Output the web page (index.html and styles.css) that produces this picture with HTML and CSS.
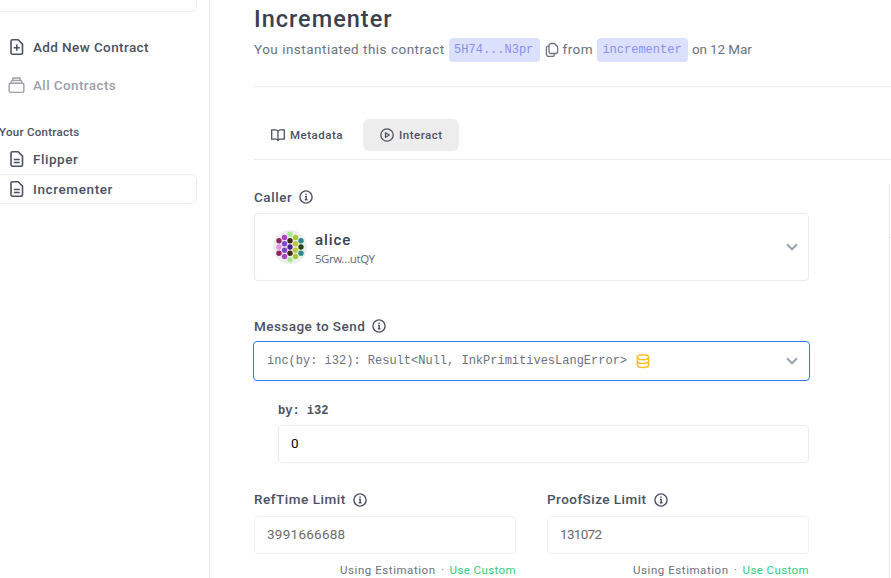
FILE: index.html
```html
<!DOCTYPE html>
<html lang="en">
<head>
<meta charset="utf-8">
<title>Incrementer</title>
<link rel="stylesheet" href="styles.css">
</head>
<body>
<svg class="defs" aria-hidden="true">
  <symbol id="info" viewBox="0 0 16 16" fill="none" stroke="currentColor" stroke-width="1.4"><circle cx="8" cy="8" r="6.1"/><path d="M7 7.5h1.2v3M6.8 10.7h2.7"/><path d="M7.4 5.3h1.3"/></symbol>
  <symbol id="doc" viewBox="0 0 16 18" fill="none" stroke="currentColor" stroke-width="1.6" stroke-linejoin="round"><path d="M3.5 1.8h5.7l4.3 4.3v8.6a1.5 1.5 0 0 1-1.5 1.5H3.5A1.5 1.5 0 0 1 2 14.7V3.3a1.5 1.5 0 0 1 1.5-1.5z"/><path d="M4.8 9.5h6M4.8 12.5h6"/></symbol>
  <symbol id="chevron" viewBox="0 0 12 8" fill="none" stroke="currentColor" stroke-width="2"><path d="M1 1.3l5 5 5-5"/></symbol>
</svg>
<div class="app">
  <aside class="sidebar">
    <div class="network"></div>
    <a class="link add"><svg viewBox="0 0 16 18" class="ic doc" fill="none" stroke="currentColor" stroke-width="1.6" stroke-linejoin="round"><path d="M3.5 1.8h5.7l4.3 4.3v8.6a1.5 1.5 0 0 1-1.5 1.5H3.5A1.5 1.5 0 0 1 2 14.7V3.3a1.5 1.5 0 0 1 1.5-1.5z"/><path d="M4.7 9.7h6.2M7.8 6.6v6.2"/></svg><span class="t-add">Add New Contract</span></a>
    <a class="link all"><svg viewBox="0 0 18 18" class="ic stack" fill="none" stroke="currentColor" stroke-width="1.5" stroke-linejoin="round"><rect x="1.2" y="7.2" width="15.6" height="9.6" rx="1.6"/><path d="M3 7l1-2.8h10L15 7M5.2 4V1.6h7.6V4"/></svg><span class="t-all">All Contracts</span></a>
    <div class="group t-your">Your Contracts</div>
    <a class="link item"><svg class="ic doc"><use href="#doc"/></svg><span class="t-flip">Flipper</span></a>
    <a class="link item active"><svg class="ic doc"><use href="#doc"/></svg><span class="t-inc">Incrementer</span></a>
  </aside>
  <main class="main">
    <h1><span class="t-h1">Incrementer</span></h1>
    <div class="sub"><span class="t-you">You instantiated this contract</span><code>5H74...N3pr</code><svg class="copy" viewBox="0 0 14 16" fill="none" stroke="currentColor" stroke-width="1.3" stroke-linejoin="round"><path d="M6 1.5h3.4l3.2 3.2v4.8a2 2 0 0 1-2 2H6a2 2 0 0 1-2-2v-6a2 2 0 0 1 2-2z"/><path d="M4 4.2H2.900a1.500 1.500 0 0 0-1.500 1.500V12a2.400 2.400 0 0 0 2.400 2.400h4a1.500 1.500 0 0 0 1.500-1.500v-1.200"/></svg><span class="t-from">from</span><code>incrementer</code><span class="t-on">on 12 Mar</span></div>
    <div class="tabs">
      <div class="tab"><svg class="book" viewBox="0 0 14 14" fill="none" stroke="currentColor" stroke-width="1.3"><path d="M7 3.2C6.5 2.3 5.5 1.8 4.5 1.8H.7v9.4h4.3C6 11.2 6.7 11.8 7 12.4 7.3 11.8 8 11.2 9 11.2h4.3V1.8H9.5C8.5 1.8 7.5 2.3 7 3.2zM7 3.2v9.2"/></svg><span class="t-meta">Metadata</span></div>
      <div class="tab on"><svg class="play" viewBox="0 0 14 14" fill="none" stroke="currentColor" stroke-width="1.3" stroke-linejoin="round"><circle cx="7" cy="7" r="6.2"/><path d="M5.5 4.7L9.3 7 5.5 9.3z"/></svg><span class="t-int">Interact</span></div>
    </div>
    <div class="content">
      <div class="form">
        <div class="label"><span class="t-call">Caller</span><svg class="info"><use href="#info"/></svg></div>
        <div class="box caller">
          <svg class="avatar" viewBox="0 0 34 34"><circle cx="17" cy="17" r="17" fill="#eee"/>
            <g fill="#a6e896"><circle cx="17" cy="4.3" r="2.7"/><circle cx="17" cy="29.7" r="2.7"/></g>
            <g fill="#b43fcb"><circle cx="11.5" cy="7.5" r="2.7"/><circle cx="11.5" cy="26.5" r="2.7"/></g>
            <g fill="#a5c83c"><circle cx="22.5" cy="7.5" r="2.7"/><circle cx="22.5" cy="26.5" r="2.7"/></g>
            <g fill="#8e2860"><circle cx="6" cy="10.7" r="2.7"/><circle cx="6" cy="23.3" r="2.7"/></g>
            <g fill="#3b2916"><circle cx="17" cy="10.7" r="2.7"/><circle cx="17" cy="23.3" r="2.7"/></g>
            <g fill="#288c8c"><circle cx="28" cy="10.7" r="2.7"/><circle cx="28" cy="23.3" r="2.7"/></g>
            <g fill="#8246cc"><circle cx="11.5" cy="13.8" r="2.7"/><circle cx="11.5" cy="20.2" r="2.7"/></g>
            <g fill="#b9ca42"><circle cx="22.5" cy="13.8" r="2.7"/><circle cx="22.5" cy="20.2" r="2.7"/></g>
            <circle cx="6" cy="17" r="2.7" fill="#e194e3"/><circle cx="17" cy="17" r="2.7" fill="#46258d"/><circle cx="28" cy="17" r="2.7" fill="#2d4515"/></svg>
          <div class="who"><b><span class="t-alice">alice</span></b><small><span class="t-addr">5Grw…utQY</span></small></div>
          <svg class="chev"><use href="#chevron"/></svg>
        </div>
        <div class="label second"><span class="t-msg">Message to Send</span><svg class="info"><use href="#info"/></svg></div>
        <div class="box message"><span class="mono">inc(by: i32): Result&lt;Null, InkPrimitivesLangError&gt;</span><svg class="db" viewBox="0 0 14 16" fill="none" stroke="#fbbf24" stroke-width="1.5"><ellipse cx="7" cy="4.2" rx="5.6" ry="2.5"/><path d="M1.4 4v8c0 1.5 2.3 2.5 5.6 2.5s5.6-1 5.6-2.5V4M1.4 8c0 1.5 2.3 2.5 5.6 2.5s5.6-1 5.6-2.5"/></svg><svg class="chev"><use href="#chevron"/></svg></div>
        <div class="arg"><div class="argname">by: i32</div><div class="box input"><span>0</span></div></div>
        <div class="limits">
          <div><div class="label"><span class="t-ref">RefTime Limit</span><svg class="info"><use href="#info"/></svg></div><div class="box input dim"><span class="t-n1">3991666688</span></div><div class="hint"><span class="t-using">Using Estimation</span><i>·</i><a class="t-use">Use Custom</a></div></div>
          <div><div class="label"><span class="t-proof">ProofSize Limit</span><svg class="info"><use href="#info"/></svg></div><div class="box input dim"><span class="t-n2">131072</span></div><div class="hint"><span class="t-using">Using Estimation</span><i>·</i><a class="t-use">Use Custom</a></div></div>
        </div>
      </div>
      <div class="results"><div class="rule"></div></div>
    </div>
  </main>
</div>
</body>
</html>
```
FILE: styles.css
```css
* { box-sizing: border-box; }
body { margin: 0; overflow: hidden; background: #fff; color: #4b5162; font: 13.5px/20px Roboto, sans-serif; }
.defs { position: absolute; width: 0; height: 0; }
svg { display: block; flex: none; }
.app { display: grid; grid-template-columns: 210px 681px; height: 578px; overflow: hidden; }
.sidebar { border-right: 1px solid #ececec; padding-right: 12px; }
.network { height: 12px; border: solid #ececec; border-width: 0 1px 1px 0; border-bottom-right-radius: 5px; margin-bottom: 20px; }
.link { display: flex; align-items: center; gap: 8px; height: 30px; padding-left: 8px; font-weight: 500; }
.ic { width: 17px; height: 18px; }
.doc { width: 16px; margin: 0 0 0 1px; }
.add { margin-bottom: 8px; }
.all { color: #9ca0ab; }
.group { font-size: 11.5px; font-weight: 500; line-height: 16px; margin: 24px 0 4px -1px; }
.active { border: solid #ececec; border-width: 1px 1px 1px 0; border-radius: 0 6px 6px 0; }
.main { padding-left: 44px; }
h1 { margin: 3px 0 0; font-size: 23.5px; line-height: 32px; font-weight: 500; color: #3b4150; }
.sub { display: flex; align-items: center; height: 24px; margin-top: 3px; color: #6b7280; }
.sub span { margin-top: -3px; }
.sub code { font: 12px/24px "Liberation Mono", monospace; width: 91px; padding-left: 5.5px; background: #dbe1fd; color: #8a8ff2; border-radius: 4px; margin: 0 4px; }
.copy { width: 14px; height: 16px; margin: 0 4px 0 1px; }
.tabs { display: flex; gap: 4px; border-top: 1px solid #ececec; border-bottom: 1px solid #ececec; height: 74px; margin-top: 24px; padding-top: 32px; }
.tab { display: flex; align-items: center; height: 32px; padding-left: 17px; gap: 5px; font-size: 11.5px; font-weight: 500; width: 105px; border-radius: 6px; }
.on { background: #ededed; width: 96px; }
.book, .play { width: 14px; height: 14px; }
.content { display: grid; grid-template-columns: 555px 1fr; column-gap: 80px; height: 420px; margin-top: 25px; }
.form { padding-top: 3px; }
.label { display: flex; align-items: center; height: 18px; gap: 6px; font-weight: 500; margin-bottom: 7px; }
.info { width: 16px; height: 16px; }
.box { display: flex; align-items: center; border: 1px solid #ececec; border-radius: 4px; }
.caller { height: 68px; padding: 0 10px 0 18px; }
.avatar { width: 34px; height: 34px; margin-right: 8px; }
.who { display: flex; flex-direction: column; padding-top: 4px; }
.who b { font-size: 15px; font-weight: 500; line-height: 20px; color: #3b4150; }
.who small { font: 11.5px/18px "Noto Sans", sans-serif; color: #6b7280; }
.chev { width: 12px; height: 8px; margin-left: auto; color: #9ca3af; }
.second { margin-top: 36px; margin-bottom: 6px; }
.message { height: 40px; margin: 0 -1px; border-color: #2b7fee; padding: 0 11px 0 13px; }
.mono { font: 12px/18px "Liberation Mono", monospace; color: #6b7280; }
.db { width: 14px; height: 16px; margin-left: 9px; }
.arg { padding-left: 24px; margin-top: 21px; }
.argname { font: bold 12px/18px "Liberation Mono", monospace; margin-bottom: 5px; }
.input { height: 38px; padding: 0 12px 2px; color: #000; }
.dim { color: #6b6b6b; border-color: #f1f1f1; }
.limits { display: grid; grid-template-columns: 262px 262px; column-gap: 31px; margin-top: 28px; }
.limits .label span { margin-top: -2px; }
.hint { display: flex; justify-content: flex-end; font-size: 11.5px; line-height: 16px; margin-top: 8px; color: #6b7280; }
.hint i { font-style: normal; width: 14px; text-align: center; }
.hint a { color: #2fce85; }
.results { border-left: 1px solid #e5e7eb; }
.rule { border-top: 1px solid #e5e7eb; margin-top: 52px; }

.t-add, .t-all { letter-spacing: .4px; }
.t-your { letter-spacing: .28px; }
.t-flip { letter-spacing: .53px; }
.t-inc { letter-spacing: .61px; }
.t-h1 { letter-spacing: 1px; }
.t-you { letter-spacing: .49px; }
.t-from { letter-spacing: .4px; }
.t-on { letter-spacing: -.1px; }
.t-meta, .t-int { letter-spacing: .5px; }
.t-call { letter-spacing: .55px; }
.t-alice { letter-spacing: .9px; }
.t-addr { letter-spacing: -.5px; }
.t-msg { letter-spacing: .46px; }
.t-ref { letter-spacing: .53px; }
.t-proof { letter-spacing: .46px; }
.t-n1 { letter-spacing: .26px; }
.t-n2 { letter-spacing: -.7px; }
.t-using { letter-spacing: .55px; }
.t-use { letter-spacing: .4px; }
```
